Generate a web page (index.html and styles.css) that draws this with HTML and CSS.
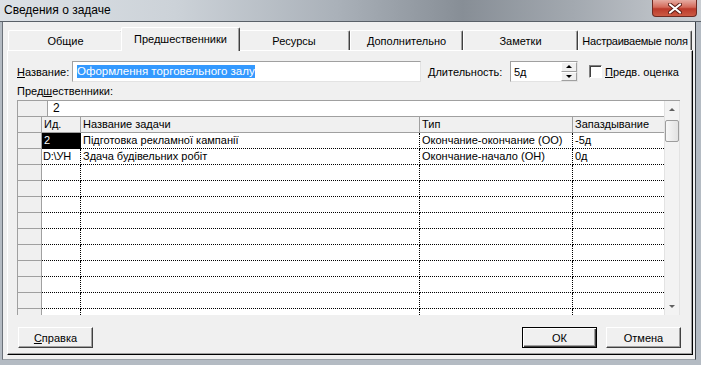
FILE: index.html
```html
<html>
	<head>
		<title>Сведения о задаче</title>
		<link rel="stylesheet" href="styles.css">
	</head>
	<body>
		<div class="window">
			<!-- title bar -->
			<div class="titlebar">
				<span class="title">Сведения о задаче</span>
				<div class="close">
					<svg width="14" height="11" viewBox="0 0 14 11">
						<path d="M2 1.5 L12 9.5 M12 1.5 L2 9.5" stroke="#5a1d16" stroke-width="4" stroke-linecap="round"/>
						<path d="M2 1.5 L12 9.5 M12 1.5 L2 9.5" stroke="#fff" stroke-width="2.2" stroke-linecap="round"/>
					</svg>
				</div>
			</div>

			<div class="client">
				<!-- tabs -->
				<div class="tabs">
					<div class="tab tab-general">Общие</div>
					<div class="tab active">Предшественники</div>
					<div class="tab tab-res">Ресурсы</div>
					<div class="tab tab-more">Дополнительно</div>
					<div class="tab tab-notes">Заметки</div>
					<div class="tab tab-custom">Настраиваемые поля</div>
				</div>

				<div class="panel">
					<div class="fields">
						<label class="lbl-name"><u>Н</u>азвание:</label>
						<div class="textbox name-box"><span class="sel">Оформлення торговельного залу</span></div>
						<label class="lbl-dur"><u>Д</u>лительность:</label>
						<div class="textbox spin">
							<span>5д</span>
							<div class="spin-btns">
								<div class="spin-btn"><div class="tri-up"></div></div>
								<div class="spin-btn"><div class="tri-down"></div></div>
							</div>
						</div>
						<div class="check"></div>
						<label class="lbl-check"><u>П</u>редв. оценка</label>
					</div>

					<div class="caption">Пред<u>ш</u>ественники:</div>

					<!-- predecessors grid -->
					<div class="grid">
						<div class="grid-body">
							<div class="entry">
								<div class="entry-cell"></div>
								<div class="entry-input">2</div>
							</div>
							<div class="row head">
								<div class="rh"></div>
								<div>Ид.</div>
								<div>Название задачи</div>
								<div>Тип</div>
								<div>Запаздывание</div>
							</div>
							<div class="row">
								<div class="rh"></div>
								<div class="sel-cell">2</div>
								<div>Підготовка рекламної кампанії</div>
								<div>Окончание-окончание (ОО)</div>
								<div>-5д</div>
							</div>
							<div class="row">
								<div class="rh"></div>
								<div class="clip">D:\УН</div>
								<div>Здача будівельних робіт</div>
								<div>Окончание-начало (ОН)</div>
								<div>0д</div>
							</div>
							<div class="row"><div class="rh"></div><div></div><div></div><div></div><div></div></div>
							<div class="row"><div class="rh"></div><div></div><div></div><div></div><div></div></div>
							<div class="row"><div class="rh"></div><div></div><div></div><div></div><div></div></div>
							<div class="row"><div class="rh"></div><div></div><div></div><div></div><div></div></div>
							<div class="row"><div class="rh"></div><div></div><div></div><div></div><div></div></div>
							<div class="row"><div class="rh"></div><div></div><div></div><div></div><div></div></div>
							<div class="row"><div class="rh"></div><div></div><div></div><div></div><div></div></div>
							<div class="row"><div class="rh"></div><div></div><div></div><div></div><div></div></div>
							<div class="row"><div class="rh"></div><div></div><div></div><div></div><div></div></div>
							<div class="row"><div class="rh"></div><div></div><div></div><div></div><div></div></div>
						</div>
						<div class="scroll">
							<div class="sb-btn"><div class="sb-up"></div></div>
							<div class="thumb"></div>
							<div class="track"></div>
							<div class="sb-btn"><div class="sb-down"></div></div>
						</div>
					</div>

					<div class="buttons">
						<div class="btn"><span><u>С</u>правка</span></div>
						<div class="btn btn-ok">ОК</div>
						<div class="btn btn-cancel">Отмена</div>
					</div>
				</div>
			</div>
		</div>
	</body>
</html>
```

FILE: styles.css
```css
/* dialog window */
body {
	margin: 0;
	width: 701px;
	height: 365px;
	overflow: hidden;
	background: #b4bbc3;
	font-family: "Liberation Sans", Arial, sans-serif;
	font-size: 11px;
	color: #000;
}

.window {
	display: flex;
	flex-direction: column;
	height: 365px;
}

.titlebar {
	height: 21px;
	border-bottom: 1px solid #596068;
	display: flex;
	align-items: flex-start;
	background: linear-gradient(to right, #dce1e6 0%, #ccd2d8 25%, #aab1b9 48%, #878e96 66%, #a3a9b0 82%, #c9cdd2 100%);
}

.title {
	font-size: 12px;
	padding: 3px 0 0 4px;
}

.close {
	margin-left: auto;
	margin-right: 4px;
	width: 45px;
	height: 17px;
	box-sizing: border-box;
	border: 1px solid #6e2a22;
	border-top: none;
	border-radius: 0 0 4px 4px;
	background: linear-gradient(#e6aca2, #d46a5a 45%, #bb3a2b 55%, #cc5a44);
	display: flex;
	align-items: center;
	justify-content: center;
}

.client {
	flex: 1;
	margin: 0 5px 5px 2px;
	background: #f0f0f0;
	border-left: 1px solid #6b7179;
	border-right: 1px solid #3a3f45;
	border-bottom: 1px solid #9aa0a6;
	padding: 5px 0 0 4px;
}

/* tabs */
.tabs {
	display: flex;
	height: 23px;
	align-items: flex-end;
	padding-left: 1px;
}

.tab {
	height: 20px;
	box-sizing: border-box;
	border-top: 1px solid #fff;
	border-left: 1px solid #fff;
	border-right: 1px solid #404040;
	box-shadow: inset -1px 0 #a0a0a0;
	border-radius: 2px 2px 0 0;
	display: flex;
	align-items: center;
	justify-content: center;
	background: #f0f0f0;
}

.tab-general { width: 115px; }
.tab-res { width: 112px; }
.tab-more { width: 113px; }
.tab-notes { width: 115px; }

.tab-custom {
	width: 114px;
	letter-spacing: -0.25px;
	white-space: nowrap;
}

.tab.active {
	position: relative;
	z-index: 2;
	width: 119px;
	height: 24px;
	margin: 0 -2px -1px -2px;
	padding-bottom: 2px;
}

/* tab page */
.panel {
	width: 686px;
	height: 305px;
	box-sizing: border-box;
	border-top: 1px solid #fff;
	border-left: 1px solid #fff;
	border-right: 1px solid #000;
	border-bottom: 1px solid #000;
	box-shadow: inset -1px -1px #a0a0a0;
}

.fields {
	display: flex;
	align-items: center;
	height: 21px;
	margin-top: 10px;
	padding-left: 9px;
}

.lbl-name {
	width: 55px;
}

.textbox {
	height: 21px;
	box-sizing: border-box;
	background: #fff;
	border: 1px solid;
	border-color: #a0a0a0 #e3e3e3 #e3e3e3 #a0a0a0;
	display: flex;
	align-items: center;
}

.name-box {
	width: 349px;
	padding-left: 4px;
	font-size: 11.5px;
}

.sel {
	background: #3399ff;
	color: #fff;
	line-height: 13px;
}

.lbl-dur {
	margin-left: 7px;
	width: 82px;
}

.spin {
	width: 68px;
	padding-left: 3px;
	justify-content: space-between;
}

.spin-btns {
	width: 16px;
	height: 19px;
	display: flex;
	flex-direction: column;
}

.spin-btn {
	flex: 1;
	box-sizing: border-box;
	background: #f0f0f0;
	border: 1px solid;
	border-color: #fff #a0a0a0 #a0a0a0 #fff;
	display: flex;
	align-items: center;
	justify-content: center;
}

.tri-up, .sb-up {
	width: 0;
	height: 0;
	border-left: 3px solid transparent;
	border-right: 3px solid transparent;
	border-bottom: 3px solid #000;
}

.tri-down, .sb-down {
	width: 0;
	height: 0;
	border-left: 3px solid transparent;
	border-right: 3px solid transparent;
	border-top: 3px solid #000;
}

.sb-up { border-bottom-color: #606060; }
.sb-down { border-top-color: #606060; }

.check {
	margin-left: 11px;
	width: 13px;
	height: 13px;
	box-sizing: border-box;
	background: #fff;
	border: 1px solid;
	border-color: #808080 #fff #fff #808080;
	box-shadow: inset 1px 1px #404040;
}

.lbl-check {
	margin-left: 3px;
}

.caption {
	margin: 3px 0 0 9px;
	height: 15px;
	line-height: 13px;
}

/* grid */
.grid {
	margin-left: 9px;
	width: 663px;
	height: 215px;
	box-sizing: border-box;
	border-top: 1px solid #a0a0a0;
	border-left: 1px solid #a0a0a0;
	display: flex;
	background: #fff;
}

.grid-body {
	width: 646px;
	height: 214px;
	overflow: hidden;
}

.entry {
	display: flex;
	height: 16px;
	box-sizing: border-box;
	border-bottom: 1px solid #a0a0a0;
}

.entry-cell {
	width: 30px;
	box-sizing: border-box;
	background: #f0f0f0;
	border-right: 1px solid #a0a0a0;
}

.entry-input {
	padding-left: 5px;
	line-height: 15px;
	font-size: 12px;
}

.row {
	display: grid;
	grid-template-columns: 24px 39px 339px 153px 91px;
	height: 16px;
}

.row > div {
	box-sizing: border-box;
	border-right: 1px dotted #000;
	border-bottom: 1px dotted #000;
	padding-left: 2px;
	line-height: 15px;
	white-space: nowrap;
	overflow: hidden;
}

.row > div:last-child {
	border-right: none;
}

.row .rh, .head > div {
	background: #f0f0f0;
	border-right: 1px solid #a0a0a0;
	border-bottom: 1px solid #a0a0a0;
}

.head > div:last-child {
	border-right: none;
}

.row .sel-cell {
	background: #000;
	color: #fff;
}

.row .clip {
	padding-left: 1px;
	letter-spacing: -0.2px;
}

.scroll {
	width: 16px;
	height: 214px;
	box-sizing: border-box;
	background: #f3f3f3;
	border-left: 1px solid #e3e3e3;
	border-right: 1px solid #e3e3e3;
	display: flex;
	flex-direction: column;
}

.sb-btn {
	height: 17px;
	display: flex;
	align-items: center;
	justify-content: center;
}

.thumb {
	height: 22px;
	margin: 2px 0 0 0;
	box-sizing: border-box;
	border: 1px solid #9d9d9d;
	border-radius: 2px;
	background: linear-gradient(to right, #f7f7f7, #e2e2e2);
}

.track {
	flex: 1;
}

/* buttons */
.buttons {
	display: flex;
	margin-top: 12px;
	padding: 0 11px 0 10px;
}

.btn {
	width: 75px;
	height: 21px;
	box-sizing: border-box;
	background: #f0f0f0;
	border: 1px solid;
	border-color: #fff #404040 #404040 #fff;
	box-shadow: inset -1px -1px #a0a0a0;
	display: flex;
	align-items: center;
	justify-content: center;
}

.btn-ok {
	margin-left: auto;
	border-color: #000;
	box-shadow: inset 1px 1px #fff, inset -1px -1px #404040, inset -2px -2px #a0a0a0;
}

.btn-cancel {
	margin-left: 9px;
}
```
